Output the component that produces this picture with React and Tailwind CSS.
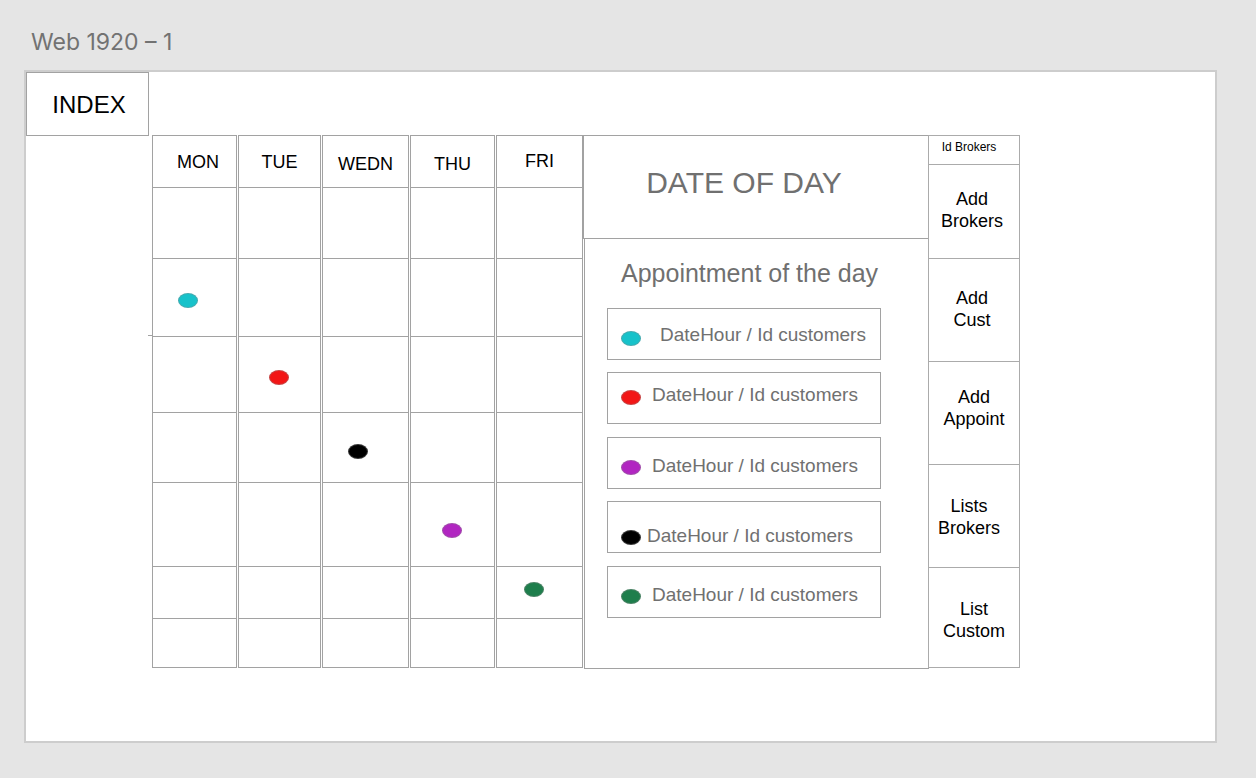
import React from 'react';

const rowHeights = ['h-[71px]', 'h-[78px]', 'h-[76px]', 'h-[70px]', 'h-[84px]', 'h-[52px]', 'h-[48px]'];

// each day column, with the row index holding its dot and where the dot sits
const days = [
  { name: 'MON', width: 'w-[85px]', label: 'pt-[1px] pl-[7px]', dotRow: 1, dot: 'ml-[25px] mt-[34px] bg-[#17c2ca]' },
  { name: 'TUE', width: 'w-[83px]', label: 'pt-[1px]', dotRow: 2, dot: 'ml-[30px] mt-[33px] bg-[#f21616]' },
  { name: 'WEDN', width: 'w-[87px]', label: 'pt-[5px]', dotRow: 3, dot: 'ml-[25px] mt-[31px] bg-black' },
  { name: 'THU', width: 'w-[85px]', label: 'pt-[5px]', dotRow: 4, dot: 'ml-[31px] mt-[40px] bg-[#b126c1]' },
  { name: 'FRI', width: 'w-[87px]', label: 'pt-[0px]', dotRow: 5, dot: 'ml-[27px] mt-[15px] bg-[#1e7e4c]' },
];

const appointments = [
  { dot: 'bg-[#17c2ca]', shift: 'translate-y-[1px]', textGap: 'ml-[20px]', dotShift: 'translate-y-[3px]', mt: 'mt-[20px]' },
  { dot: 'bg-[#f21616]', shift: '-translate-y-[3px]', textGap: 'ml-[12px]', dotShift: 'translate-y-[2px]', mt: 'mt-[12px]' },
  { dot: 'bg-[#b126c1]', shift: 'translate-y-[3px]', textGap: 'ml-[12px]', dotShift: 'translate-y-[1px]', mt: 'mt-[13px]' },
  { dot: 'bg-black', shift: 'translate-y-[9px]', textGap: 'ml-[7px]', dotShift: 'translate-y-[1px]', mt: 'mt-[12px]' },
  { dot: 'bg-[#1e7e4c]', shift: 'translate-y-[3px]', textGap: 'ml-[12px]', dotShift: 'translate-y-[1px]', mt: 'mt-[13px]' },
];

const actions = [
  { lines: ['Add', 'Brokers'], h: 'h-[94px]', pos: 'pr-[4px] -translate-y-[2px]' },
  { lines: ['Add', 'Cust'], h: 'h-[103px]', pos: 'pr-[4px] -translate-y-[1px]' },
  { lines: ['Add', 'Appoint'], h: 'h-[103px]', pos: '-translate-y-[5px]' },
  { lines: ['Lists', 'Brokers'], h: 'h-[103px]', pos: 'pr-[10px] translate-y-[1px]' },
  { lines: ['List', 'Custom'], h: 'h-[99px]', pos: 'translate-y-[2px]' },
];

function Dot({ color, className = '' }) {
  return <div className={`w-[20px] h-[15px] rounded-[50%] border border-[#8a8a8a]/40 ${color} ${className}`} />;
}

function DayColumn({ day }) {
  return (
    <div className={`${day.width} h-[533px] border border-[#a2a2a2] flex flex-col`}>
      <div className={`h-[52px] border-b border-[#a2a2a2] flex justify-center items-center text-[18px] text-black ${day.label}`}>
        {day.name}
      </div>
      {rowHeights.map((h, i) => (
        <div
          key={i}
          className={`${h} ${i < rowHeights.length - 1 ? 'border-b border-[#a2a2a2]' : ''} flex items-start`}
        >
          {i === day.dotRow && <Dot color={day.dot} />}
        </div>
      ))}
    </div>
  );
}

export default function App() {
  return (
    <div className="min-h-screen bg-[#e5e5e5] pt-[29px] overflow-hidden" style={{ fontFamily: '"Liberation Sans", Arial, sans-serif' }}>
      <div className="pl-[31px] text-[23px] leading-[26px] text-[#727272]" style={{ fontFamily: 'Inter, "Liberation Sans", sans-serif' }}>
        Web 1920 – 1
      </div>

      <div className="mt-[15px] ml-[24px] w-[1193px] h-[673px] border-2 border-[#cdcdcd] bg-white">
        <div className="w-[123px] h-[64px] border border-[#a2a2a2] flex items-center justify-center pl-[3px] pt-[1px] text-[24px] text-black">
          INDEX
        </div>

        <div className="-mt-px ml-[126px] flex items-start">
          <div className="relative flex gap-[1px]">
            {days.map((d) => (
              <DayColumn key={d.name} day={d} />
            ))}
            <div className="absolute left-[-4px] top-[200px] w-[5px] border-t border-[#a2a2a2]" />
          </div>

          <div className="w-[346px]">
            <div className="h-[104px] border border-[#a2a2a2] flex items-center justify-center pr-[24px] pb-[10px] text-[30px] text-[#707070]">
              DATE OF DAY
            </div>
            <div className="ml-px h-[430px] border-x border-b border-[#a2a2a2]">
              <div className="pt-[19px] pl-[36px] text-[25px] leading-[30px] text-[#707070]">
                Appointment of the day
              </div>
              {appointments.map((a, i) => (
                <div
                  key={i}
                  className={`${a.mt} ml-[22px] w-[274px] h-[52px] border border-[#a2a2a2] flex items-center pl-[13px] text-[19px] text-[#707070]`}
                >
                  <div className={`flex items-center ${a.shift}`}>
                    <Dot color={a.dot} className={a.dotShift} />
                    <span className={`${a.textGap} -translate-x-px`}>DateHour / Id customers</span>
                  </div>
                </div>
              ))}
            </div>
          </div>

          <div className="-ml-px w-[92px] h-[533px] border border-[#ababab] flex flex-col text-black">
            <div className="h-[29px] border-b border-[#ababab] flex justify-center pt-[2px] text-[12px] pr-[10px]">
              Id Brokers
            </div>
            {actions.map((a, i) => (
              <div
                key={i}
                className={`${a.h} ${i < actions.length - 1 ? 'border-b border-[#ababab]' : ''} flex flex-col items-center justify-center text-[18px] leading-[22px]`}
              >
                <div className={`flex flex-col items-center ${a.pos}`}>
                  {a.lines.map((l) => (
                    <span key={l}>{l}</span>
                  ))}
                </div>
              </div>
            ))}
          </div>
        </div>
      </div>
    </div>
  );
}
